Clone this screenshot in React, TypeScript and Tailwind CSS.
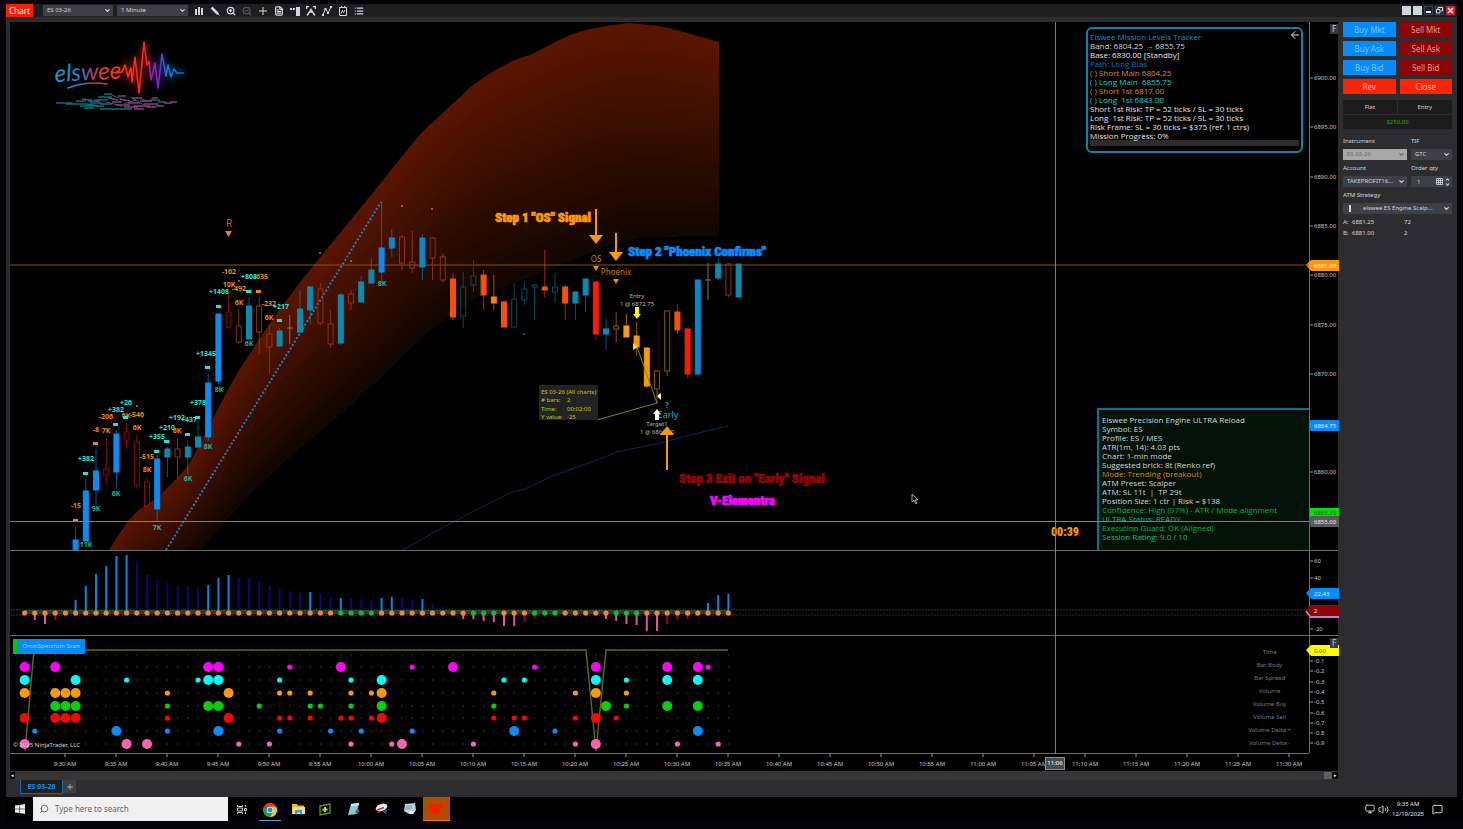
import { ReactNode } from 'react';
import {
    ArrowLeft,
    ChevronDown,
    ChevronUp,
    FileText,
    List,
    MessageSquare,
    Monitor,
    Plus,
    Search,
    Volume2,
    ZoomIn,
    ZoomOut,
} from 'lucide-react';

type Candle = [high: number, top: number, bottom: number, low: number, kind: string];

const BAR_START = 24.6;
const BAR_STEP = 10.2;
const barX = (i: number) => BAR_START + i * BAR_STEP;

const BLUE = '#0a8cf0';
const TEAL = '#0a8ab0';
const SKY = '#0889cc';

// h prefix = hollow body
const KINDS: Record<string, { color: string; hollow?: boolean }> = {
    blue: { color: BLUE },
    teal: { color: TEAL },
    sky: { color: SKY },
    hred: { color: '#8a0a00', hollow: true },
    hrust: { color: '#8f3208', hollow: true },
    hteal: { color: '#0b4a5c', hollow: true },
    hamber: { color: '#8a5600', hollow: true },
    fire: { color: '#fa5005' },
    orange: { color: '#fa8205' },
    amber: { color: '#fb9a04' },
    red: { color: '#fb1c04' },
    doji: { color: '#8f6a6e' },
};

// first entry is the 9:31 bar
const CANDLES: Candle[] = [
    [527, 540, 551, 551, 'blue'],
    [479, 491, 541, 541, 'blue'],
    [449, 471, 490, 504, 'blue'],
    [438, 469, 475, 484, 'hred'],
    [430, 434, 472, 489, 'blue'],
    [423, 432, 440, 449, 'hred'],
    [435, 442, 485, 489, 'hred'],
    [478, 482, 506, 508, 'hred'],
    [455, 459, 509, 522, 'blue'],
    [447, 449, 457, 477, 'teal'],
    [438, 449, 457, 479, 'hrust'],
    [441, 447, 457, 474, 'teal'],
    [422, 437, 447, 447, 'teal'],
    [374, 383, 437, 441, 'blue'],
    [313, 314, 381, 384, 'blue'],
    [293, 312, 327, 329, 'hred'],
    [310, 326, 342, 344, 'hrust'],
    [297, 306, 339, 339, 'teal'],
    [297, 306, 332, 354, 'hrust'],
    [325, 334, 347, 373, 'hrust'],
    [328, 331, 346, 347, 'teal'],
    [315, 328, 329, 344, 'doji'],
    [290, 309, 332, 334, 'teal'],
    [286, 287, 310, 324, 'teal'],
    [283, 289, 323, 325, 'hrust'],
    [310, 324, 344, 348, 'hrust'],
    [293, 295, 343, 345, 'teal'],
    [290, 294, 303, 310, 'hrust'],
    [276, 282, 302, 302, 'teal'],
    [258, 270, 283, 283, 'teal'],
    [202, 248, 272, 283, 'blue'],
    [229, 238, 248, 257, 'sky'],
    [235, 237, 263, 270, 'hrust'],
    [231, 262, 268, 273, 'hrust'],
    [234, 238, 267, 280, 'sky'],
    [237, 238, 258, 280, 'hrust'],
    [253, 257, 280, 282, 'hrust'],
    [273, 279, 317, 320, 'fire'],
    [272, 287, 316, 328, 'hteal'],
    [260, 276, 285, 292, 'hteal'],
    [270, 275, 295, 310, 'fire'],
    [275, 297, 303, 310, 'orange'],
    [300, 302, 327, 327, 'fire'],
    [283, 299, 327, 327, 'hteal'],
    [282, 289, 300, 305, 'hteal'],
    [284, 285, 287, 320, 'hteal'],
    [250, 287, 290, 298, 'fire'],
    [273, 287, 292, 303, 'hteal'],
    [285, 287, 303, 320, 'fire'],
    [291, 292, 303, 320, 'teal'],
    [279, 279, 295, 312, 'teal'],
    [281, 282, 334, 340, 'red'],
    [318, 329, 334, 350, 'sky'],
    [312, 326, 329, 342, 'hamber'],
    [314, 326, 337, 337, 'amber'],
    [322, 336, 347, 356, 'amber'],
    [347, 348, 386, 388, 'amber'],
    [370, 371, 389, 404, 'hamber'],
    [311, 311, 371, 376, 'hamber'],
    [304, 312, 330, 334, 'fire'],
    [328, 329, 374, 379, 'red'],
    [279, 280, 374, 376, 'sky'],
    [263, 280, 281, 300, 'doji'],
    [258, 264, 278, 280, 'teal'],
    [263, 264, 295, 297, 'hrust'],
    [264, 264, 297, 297, 'teal'],
];

const CLOUD_TOP = [
    [109, 550], [127, 522], [137, 511], [157, 498], [187, 468], [207, 430], [233, 380], [267, 327],
    [300, 282], [340, 233], [380, 184], [403, 155], [422, 132], [447, 109], [474, 84], [495, 70],
    [514, 60], [530, 55], [565, 37], [585, 30], [605, 26], [628, 23], [660, 26], [680, 31], [719, 42],
];
const CLOUD_BOTTOM = [
    [109, 630], [200, 550], [250, 493], [300, 447], [345, 410], [380, 378], [423, 335], [455, 312],
    [480, 295], [547, 270], [613, 243], [643, 237], [719, 235],
];

const LABELS: [x: number, y: number, text: string, tone: 'o' | 'c' | 'g'][] = [
    [229, 274, '-162', 'o'], [229, 287, '10K', 'o'], [239, 291, '-492', 'o'], [249, 279, '+808', 'c'],
    [261, 279, '-635', 'o'], [219, 294, '+1408', 'c'], [239, 305, '6K', 'o'], [249, 346, '6K', 'g'],
    [269, 306, '-232', 'o'], [281, 309, '+217', 'c'], [269, 320, '6K', 'o'], [206, 356, '+1345', 'c'],
    [219, 392, '8K', 'g'], [198, 405, '+378', 'c'], [208, 449, '8K', 'g'], [126, 405, '+26', 'c'],
    [116, 412, '+382', 'c'], [106, 419, '-206', 'o'], [126, 418, '6K', 'o'], [137, 417, '-546', 'o'],
    [106, 433, '7K', 'o'], [137, 430, '6K', 'o'], [96, 432, '-8', 'o'], [147, 459, '-515', 'o'],
    [147, 472, '8K', 'o'], [157, 439, '+355', 'c'], [167, 430, '+210', 'c'], [177, 420, '+192', 'c'],
    [189, 422, '+437', 'c'], [177, 433, '6K', 'o'], [188, 481, '6K', 'g'], [86, 461, '+382', 'c'],
    [116, 496, '6K', 'g'], [96, 511, '9K', 'g'], [157, 530, '7K', 'g'], [76, 508, '-15', 'o'],
    [86, 547, '11K', 'g'], [382, 286, '8K', 'g'],
];
const TONES = { o: '#ee8a0a', c: '#1ee6dc', g: '#1eb496' };

const CYAN_MARKS = [
    [86, 473], [116, 424], [219, 306], [249, 291], [208, 367], [198, 417], [188, 434], [167, 441],
    [157, 451], [126, 417], [280, 320],
];
const ORANGE_MARKS = [[76, 520], [96, 443], [259, 291]];
const ORANGE_DOTS = [[137, 406], [239, 281], [320, 253], [351, 261], [402, 206], [432, 209]];

const HISTOGRAM: [bar: number, y: number, color: 'b' | 'n' | 'p' | 'r'][] = [
    [1, 620, 'p'], [2, 624, 'p'], [3, 620, 'r'], [5, 600, 'b'], [6, 586, 'b'], [7, 574, 'b'], [8, 566, 'b'],
    [9, 556, 'b'], [10, 555, 'b'], [11, 563, 'n'], [12, 575, 'n'], [13, 580, 'n'], [14, 583, 'n'],
    [15, 586, 'n'], [16, 586, 'n'], [17, 587, 'n'], [18, 585, 'b'], [19, 578, 'b'], [20, 575, 'b'],
    [21, 578, 'n'], [22, 578, 'n'], [23, 581, 'n'], [24, 586, 'n'], [25, 588, 'n'], [26, 591, 'n'],
    [27, 593, 'n'], [28, 592, 'b'], [29, 594, 'n'], [30, 598, 'n'], [31, 598, 'b'], [32, 599, 'n'],
    [33, 599, 'n'], [34, 600, 'n'], [35, 598, 'b'], [36, 597, 'b'], [37, 598, 'n'], [38, 600, 'n'],
    [39, 599, 'b'], [40, 603, 'n'], [41, 607, 'n'], [43, 619, 'p'], [44, 619, 'p'], [45, 621, 'p'],
    [46, 622, 'p'], [47, 626, 'p'], [48, 626, 'p'], [49, 622, 'r'], [50, 618, 'r'], [57, 619, 'p'],
    [58, 621, 'p'], [59, 624, 'p'], [60, 625, 'p'], [61, 631, 'p'], [62, 631, 'p'], [63, 624, 'r'],
    [64, 620, 'r'], [65, 619, 'r'], [67, 603, 'b'], [68, 595, 'b'], [69, 594, 'b'],
];
const HIST_COLORS = { b: '#0a84e8', n: '#08087a', p: '#e2569f', r: '#96060a' };
const GREEN_BARS = [31, 32, 33, 34, 44, 45, 46, 50, 51, 52, 58, 59, 60];

const SCAN_ROWS = [
    { y: 667, color: '#fa05fa', big: [0, 3, 18, 19, 31, 42, 56, 63, 66], small: [26, 38, 50, 67] },
    { y: 680, color: '#05fafa', big: [0, 5, 18, 19, 35, 56, 63, 66], small: [10, 17, 25, 32, 47, 49, 59] },
    { y: 693, color: '#fb9a04', big: [0, 3, 4, 5, 20, 35, 56], small: [14, 25, 26, 28, 32, 34, 46, 54, 59] },
    { y: 706, color: '#04d204', big: [3, 4, 5, 18, 19, 35, 57, 63, 66], small: [14, 23, 28, 29, 32, 46, 59] },
    { y: 718, color: '#fb0404', big: [0, 3, 4, 5, 20, 35, 56], small: [14, 25, 26, 28, 31, 32, 34, 46, 48, 49, 54, 58] },
    { y: 731, color: '#0a8cfa', big: [9, 19, 48, 66], small: [1, 14, 25, 30, 33, 38, 52] },
    { y: 744, color: '#fb64b4', big: [0, 10, 12, 37, 56], small: [21, 24, 32, 36, 44, 54, 64, 68] },
];
const SCAN_NAMES = ['Time', 'Bar Body', 'Bar Spread', 'Volume', 'Volume Buy', 'Volume Sell', 'Volume Delta +', 'Volume Delta -'];

const PRICES: [string, number][] = [
    ['6900.00', 78], ['6895.00', 127], ['6890.00', 177], ['6885.00', 226], ['6880.00', 275],
    ['6875.00', 325], ['6870.00', 374], ['6860.00', 472],
];

const TIMES = Array.from({ length: 25 }, (_, i) => {
    const min = 570 + i * 5;
    return `${Math.floor(min / 60)}:${String(min % 60).padStart(2, '0')} AM`;
});

const TRACKER: [string, string][] = [
    ['Elswee Mission Levels Tracker', 'text-[#0e9bbd]'],
    ['Band: 6804.25 → 6855.75', 'text-gray-300'],
    ['Base: 6830.00 [Standby]', 'text-gray-200'],
    ['Path: Long Bias', 'text-[#0a6fd0]'],
    ['( ) Short Main 6804.25', 'text-[#e08a0a]'],
    ['( ) Long Main  6855.75', 'text-[#14d6cc]'],
    ['( ) Short 1st 6817.00', 'text-[#e08a0a]'],
    ['( ) Long  1st 6843.00', 'text-[#14d6cc]'],
    ['Short 1st Risk: TP = 52 ticks / SL = 30 ticks', 'text-gray-200'],
    ['Long  1st Risk: TP = 52 ticks / SL = 30 ticks', 'text-gray-200'],
    ['Risk Frame: SL = 30 ticks = $375 (ref. 1 ctrs)', 'text-gray-200'],
    ['Mission Progress: 0%', 'text-gray-200'],
];

const ENGINE: [string, string][] = [
    ['Elswee Precision Engine ULTRA Reload', 'text-gray-300'],
    ['Symbol: ES', 'text-gray-300'],
    ['Profile: ES / MES', 'text-gray-300'],
    ['ATR(1m, 14): 4.03 pts', 'text-gray-300'],
    ['Chart: 1-min mode', 'text-gray-300'],
    ['Suggested brick: 8t (Renko ref)', 'text-gray-300'],
    ['Mode: Trending (breakout)', 'text-[#d9860c]'],
    ['ATM Preset: Scalper', 'text-gray-300'],
    ['ATM: SL 11t  |  TP 29t', 'text-gray-300'],
    ['Position Size: 1 ctr | Risk = $138', 'text-gray-300'],
    ['Confidence: High (97%) - ATR / Mode alignment', 'text-[#0cb04c]'],
    ['ULTRA Status: READY', 'text-[#0fb58c]'],
    ['Execution Guard: OK (Aligned)', 'text-[#0cb04c]'],
    ['Session Rating: 9.0 / 10', 'text-[#0cc070]'],
];

const sampleAt = (points: number[][], x: number) => {
    const next = points.findIndex((p) => p[0] >= x);
    if (next <= 0) return points[0][1];
    const [x0, y0] = points[next - 1];
    const [x1, y1] = points[next];
    return y0 + ((y1 - y0) * (x - x0)) / (x1 - x0);
};

const CLOUD_BANDS = Array.from({ length: 24 }, (_, band) => {
    const xs = Array.from({ length: 62 }, (_, i) => 109 + i * 10);
    const edge = (t: number) =>
        xs.map((x) => {
            const top = sampleAt(CLOUD_TOP, x);
            return `${x},${(top + (sampleAt(CLOUD_BOTTOM, x) - top) * t).toFixed(1)}`;
        });
    const t = band / 23;
    const mix = (a: number, b: number) => Math.round(a + (b - a) * t);
    return {
        points: [...edge(band / 24), ...edge(1).reverse()].join(' '),
        color: `rgb(${mix(90, 18)}, ${mix(21, 6)}, ${mix(0, 0)})`,
    };
});

const PULSE =
    'M115 73 122 72 125 65 128 77 131 68 132 82 135 57 137 75 139 93 144 42 147 65 149 61 151 80 155 63 158 88 162 54 166 76 168 65 171 77 174 69 177 73 184 73';

function Logo() {
    return (
        <>
            <defs>
                <linearGradient id="word" gradientUnits="userSpaceOnUse" x1="55" y1="0" x2="120" y2="0">
                    <stop offset="0" stopColor="#0f9fd0" />
                    <stop offset="0.38" stopColor="#1f86d8" />
                    <stop offset="0.55" stopColor="#a33a78" />
                    <stop offset="0.75" stopColor="#f03c12" />
                    <stop offset="1" stopColor="#ff3a08" />
                </linearGradient>
                <linearGradient id="pulse" gradientUnits="userSpaceOnUse" x1="118" y1="0" x2="184" y2="0">
                    <stop offset="0" stopColor="#ff3a08" />
                    <stop offset="0.42" stopColor="#fb2a10" />
                    <stop offset="0.52" stopColor="#8a22b0" />
                    <stop offset="0.64" stopColor="#5c3ad0" />
                    <stop offset="0.74" stopColor="#1c78d8" />
                    <stop offset="1" stopColor="#0a6fb8" />
                </linearGradient>
                <filter id="glow" x="-20%" y="-20%" width="140%" height="140%">
                    <feGaussianBlur stdDeviation="3" />
                </filter>
            </defs>
            <path d={PULSE} fill="none" stroke="url(#pulse)" strokeWidth="5" opacity="0.35" filter="url(#glow)" />
            <path d={PULSE} fill="none" stroke="url(#pulse)" strokeWidth="1.5" strokeLinejoin="round" />
            <text
                x="55"
                y="82"
                fill="url(#word)"
                transform="rotate(-3 55 82)"
                className="font-[Lato,sans-serif] text-[24px] font-normal italic"
            >
                elswee
            </text>
            <path d="M68 88Q86 81 107 84" fill="none" stroke="url(#word)" strokeWidth="1.5" strokeLinecap="round" />
            <g fill="none" strokeWidth="1.5">
                <path
                    d="M56 103h16M66 104h20M76 101h10M80 106h18M82 99l10 1M90 103h12M86 104l14 2M84 108h10M100 109h32M104 94h8M98 97h14M96 100h12M102 104h10M150 100h10M158 102h8M88 101h12M92 106h12"
                    stroke="#0b6f7a"
                />
                <path
                    d="M108 98l10 2M112 102h10M118 96h8M120 99l10 2M116 105h14M128 103h12M132 98h10M134 106h16M140 101h12M134 109h10M144 104h14M152 98h6M156 106h8M164 103h8M170 102h7M124 107h14M146 107h10"
                    stroke="#85417a"
                />
                <path d="M112 95l14 6M106 102l16 4M124 104l12-4M140 98l8 4M94 99l8 6M130 97l14 8" stroke="#4a5a80" strokeWidth="1" />
            </g>
        </>
    );
}

function PriceTag({ y, label, bg, fg = '#e8e8e8' }: { y: number; label: string; bg: string; fg?: string }) {
    return (
        <>
            <path d={`M-4 ${y}L1 ${y - 5}H29V${y + 6}H1Z`} fill={bg} />
            <text x="4" y={y + 3} fill={fg} className="text-[6px]">
                {label}
            </text>
        </>
    );
}

function Tick({ y, label }: { y: number; label: string }) {
    return (
        <>
            <path d={`M0 ${y}H3`} stroke="#999" />
            <text x="4" y={y + 2} fill="#c4c4c4" className="text-[6px]">
                {label}
            </text>
        </>
    );
}

function Axis({ offset, children }: { offset: number; children: ReactNode }) {
    return (
        <svg className="h-full w-[29px] shrink-0 overflow-visible border-l border-[#6c6c6c]" aria-hidden="true">
            <g transform={`translate(0 ${-offset})`}>{children}</g>
        </svg>
    );
}

function Arrow({ x, from, to }: { x: number; from: number; to: number }) {
    const dir = to > from ? -1 : 1;
    return (
        <>
            <path d={`M${x} ${from}V${to + dir * 6}`} stroke="#fb9a04" strokeWidth="2" />
            <path d={`M${x - 7} ${to + dir * 9}H${x + 7}L${x} ${to}Z`} fill="#fb9a04" />
        </>
    );
}

function PriceChart() {
    return (
        <svg className="h-full w-full" role="img" aria-label="ES 03-26 price chart">
            <g transform="translate(-10 -22)">
                {CLOUD_BANDS.map((band, i) => (
                    <polygon key={i} points={band.points} fill={band.color} />
                ))}
                <Logo />
            </g>
            <line x1="0" x2="100%" y1="243" y2="243" stroke="#8a5600" />
            <g transform="translate(-10 -22)">
                <polyline
                    points="403,550 440,529 480,508 512,492 525,489 550,477 580,466 600,459 617,452 660,443 690,435 728,426"
                    fill="none"
                    stroke="#0a2c48"
                />
                <path d="M166 550 381 202" stroke="#2478cc" strokeWidth="2" strokeDasharray="2 2" />

                {CANDLES.map(([high, top, bottom, low, kind], i) => {
                    const x = barX(i + 5);
                    const { color, hollow } = KINDS[kind];
                    if (kind === 'doji') {
                        return (
                            <path key={i} d={`M${x} ${high}V${low}M${x - 3} ${top}h6`} stroke={color} />
                        );
                    }
                    return (
                        <g key={i} stroke={color}>
                            <path d={`M${x} ${high}V${top}M${x} ${bottom}V${low}`} opacity={hollow ? 1 : 0.6} />
                            <rect
                                x={x - 2.5}
                                y={top}
                                width="5"
                                height={Math.max(bottom - top, 2)}
                                fill={hollow ? 'none' : color}
                            />
                        </g>
                    );
                })}

                <g className="text-[7px] font-bold" textAnchor="middle">
                    {LABELS.map(([x, y, text, tone], i) => (
                        <text key={i} x={x} y={y} fill={TONES[tone]}>
                            {text}
                        </text>
                    ))}
                </g>
                {CYAN_MARKS.map(([x, y]) => (
                    <rect key={`${x}-${y}`} x={x - 3} y={y - 1} width="5" height="3" fill="#1ee6dc" />
                ))}
                {ORANGE_MARKS.map(([x, y]) => (
                    <rect key={`${x}-${y}`} x={x - 3} y={y - 1} width="5" height="3" fill="#ee8a0a" />
                ))}
                {ORANGE_DOTS.map(([x, y]) => (
                    <circle key={x} cx={x} cy={y} r="1" fill="#d07808" />
                ))}
                <circle cx="524" cy="334" r="1" fill="#1a70c0" />

                <text x="229" y="227" textAnchor="middle" fill="#c85c38" className="text-[10px]">R</text>
                <path d="M225 231h7l-3.5 6Z" fill="#f07850" />

                {/* trade path and its readout */}
                <path d="M637 347 657 403 597 420" fill="none" stroke="#84840a" />
                <rect x="539" y="385" width="59" height="35" fill="#232323" />
                <g fill="#c8c80c" className="text-[6px]">
                    <text x="541" y="394">ES 03-26 (All charts)</text>
                    <text x="541" y="402"># bars:</text>
                    <text x="567" y="402">2</text>
                    <text x="541" y="411">Time:</text>
                    <text x="567" y="411">00:02:00</text>
                    <text x="541" y="419">Y value:</text>
                    <text x="567" y="419">-25</text>
                </g>
                <g fill="#b8b8b8" textAnchor="middle" className="text-[6px]">
                    <text x="637" y="298">Entry</text>
                    <text x="637" y="306">1 @ 6872.75</text>
                    <text x="657" y="426">Target1</text>
                    <text x="657" y="434">1 @ 6866.50</text>
                </g>
                <path d="M635 307h4v7h2l-4 5-4-5h2Z" fill="#f5f505" />
                <path d="M633 343 638 347 633 350Z" fill="#e8e805" />
                <path d="M661 393v7l-4-4Z" fill="#fff" />
                <path d="M655 420v-6h-2l4-5 4 5h-2v6Z" fill="#fff" />
                <text x="596" y="262" textAnchor="middle" fill="#c87c0c" className="text-[8px]">OS</text>
                <path d="M593 266h6l-3 5Z" fill="#f0900a" />
                <text x="616" y="275" textAnchor="middle" fill="#c87c0c" className="text-[8px]">Phoenix</text>
                <path d="M613 279h6l-3 5Z" fill="#f0900a" />
                <text x="667" y="408" textAnchor="middle" fill="#1a90c8" className="text-[8px] font-bold">?</text>
                <text x="668" y="418" textAnchor="middle" fill="#14bcb4" className="text-[9px]">Early</text>

                <Arrow x={596} from={209} to={244} />
                <Arrow x={616} from={233} to={261} />
                <Arrow x={667} from={470} to={426} />

                <g
                    strokeWidth="0.7"
                    className="font-['Impact','Roboto_Condensed','Open_Sans_Condensed','Roboto',sans-serif] text-[13px] font-black"
                >
                    <text x="495" y="222" fill="#fb9a04" stroke="#fb9a04">Step 1 "OS" Signal</text>
                    <text x="628" y="256" fill="#0a8cfa" stroke="#0a8cfa">Step 2 "Phoenix Confirms"</text>
                    <text x="679" y="483" fill="#900608" stroke="#900608">Step 3 Exit on "Early" Signal</text>
                    <text x="710" y="505" fill="#fa05fa" stroke="#fa05fa">V-Elementra</text>
                </g>
                <path d="M912 494v8l2-2 2 4 1-1-2-3h3Z" fill="#000" stroke="#ccc" strokeWidth="0.8" />
            </g>
        </svg>
    );
}

function HistogramChart() {
    return (
        <svg className="h-full w-full" role="img" aria-label="Momentum histogram">
            <line x1="0" x2="100%" y1="59" y2="59" stroke="#3c3c3c" strokeDasharray="2 1" />
            <line x1="0" x2="100%" y1="64" y2="64" stroke="#303030" strokeDasharray="2 1" />
            <g transform="translate(-10 -551)">
                {HISTOGRAM.map(([bar, y, c]) => (
                    <line
                        key={bar}
                        x1={barX(bar)}
                        x2={barX(bar)}
                        y1="612"
                        y2={y}
                        stroke={HIST_COLORS[c]}
                        strokeWidth="2"
                    />
                ))}
                <path d="M24 611H729" stroke="#2c8a50" />
                <path d="M24 613H729" stroke="#8a5070" />
                {Array.from({ length: 70 }, (_, i) => (
                    <circle
                        key={i}
                        cx={barX(i)}
                        cy="613"
                        r="2.6"
                        fill={GREEN_BARS.includes(i) ? '#18b828' : '#f08a1e'}
                    />
                ))}
            </g>
        </svg>
    );
}

function ScanChart() {
    return (
        <svg className="h-full w-full" role="img" aria-label="OmniSpectrum scan">
            <g transform="translate(-10 -636)">
                {[655, ...SCAN_ROWS.map((row) => row.y)].map((y) => (
                    <path
                        key={y}
                        d={`M24 ${y}H730`}
                        stroke="#2a2a2a"
                        strokeWidth="1.4"
                        strokeDasharray="1.4 8.8"
                    />
                ))}
                <path d="M25 751 34 650H586L596 751 606 650H728" fill="none" stroke="#686808" strokeWidth="1.4" />
                {SCAN_ROWS.map((row) => (
                    <g key={row.y} fill={row.color}>
                        {row.big.map((i) => (
                            <circle key={i} cx={barX(i)} cy={row.y} r="5" />
                        ))}
                        {row.small.map((i) => (
                            <circle key={i} cx={barX(i)} cy={row.y} r="2.6" />
                        ))}
                    </g>
                ))}
            </g>
        </svg>
    );
}

function TimeAxis() {
    return (
        <svg className="h-[18px] w-full border-t border-[#6c6c6c]" aria-hidden="true">
            {TIMES.map((time, i) => (
                <g key={time}>
                    <path d={`M${55 + i * 51} 0v3`} stroke="#999" />
                    <text x={55 + i * 51} y="12" textAnchor="middle" fill="#c4c4c4" className="text-[6px]">
                        {time}
                    </text>
                </g>
            ))}
        </svg>
    );
}

interface DropdownProps {
    label: string;
    value: string;
    className?: string;
}

function Dropdown({ label, value, className = '' }: DropdownProps) {
    return (
        <div className={`relative h-[11px] bg-[#3f3f46] text-gray-300 ${className}`}>
            <select
                aria-label={label}
                className="block h-full w-full appearance-none truncate bg-transparent pr-2 pl-1 text-[6px] leading-[11px] outline-none"
            >
                <option>{value}</option>
            </select>
            <ChevronDown size={7} strokeWidth={4} className="pointer-events-none absolute top-[2px] right-[2px]" />
        </div>
    );
}

function ToolIcon({ label, children }: { label: string; children: ReactNode }) {
    return (
        <button aria-label={label}>
            <svg width="10" height="10" viewBox="0 0 10 10" fill="none" stroke="currentColor">
                {children}
            </svg>
        </button>
    );
}

function Toolbar() {
    return (
        <div className="flex h-[13px] items-center bg-[#1e1e1e]">
            <span className="flex h-[13px] w-[27px] items-center justify-center bg-[#fb1c04] text-[8px] text-white">
                Chart
            </span>
            <Dropdown label="Chart instrument" value="ES 03-26" className="ml-[10px] w-[70px]" />
            <Dropdown label="Interval" value="1 Minute" className="ml-1 w-[71px]" />
            <div className="ml-[6px] flex items-center gap-[6px] text-gray-300">
                <ToolIcon label="Bar type">
                    <path d="M2 3v6M5 1v8M8 2v7" strokeWidth="2" />
                </ToolIcon>
                <ToolIcon label="Drawing tools">
                    <path d="M1.5 1.5 8 8" strokeWidth="2.5" />
                    <path d="M8 8l1.5 1.5" />
                </ToolIcon>
                <button aria-label="Zoom in">
                    <ZoomIn size={10} strokeWidth={3} />
                </button>
                <button aria-label="Zoom out" className="text-gray-600">
                    <ZoomOut size={10} strokeWidth={3} />
                </button>
                <ToolIcon label="Crosshair">
                    <path d="M5 1v8M1 5h8" />
                </ToolIcon>
                <button aria-label="Chart template">
                    <FileText size={10} strokeWidth={3} />
                </button>
                <ToolIcon label="Chart trader">
                    <path d="M6 1h4v9H6zM0 2h2v2H0zM3 2h2v2H3z" fill="currentColor" stroke="none" />
                </ToolIcon>
                <ToolIcon label="Data series">
                    <path d="M.5 3V.5H3M7 .5h2.5V3M1 9.5 3.5 6 5 3.5 6.5 6 9 9.5M3 6h4" strokeWidth="1.5" />
                </ToolIcon>
                <ToolIcon label="Indicators">
                    <path d="M1 9 3.5 2.5 6 7 9 1" />
                    <path d="M0 8h2v2H0zM2.5 2h2v2h-2zM5 6h2v2H5zM8 0h2v2H8z" fill="currentColor" stroke="none" />
                </ToolIcon>
                <ToolIcon label="Strategies">
                    <path d="M1.5 1.5h7v8h-7zM3.5 0v2M6.5 0v2M3 7.5l1.5-3 1 2L7 4" />
                </ToolIcon>
                <button aria-label="Properties">
                    <List size={10} strokeWidth={3} />
                </button>
            </div>
            <div className="mr-[2px] ml-auto flex items-center gap-[2px]">
                <button aria-label="Link instrument" className="h-[9px] w-[9px] bg-gray-300" />
                <button aria-label="Link interval" className="h-[9px] w-[9px] bg-gray-300" />
                <button aria-label="Minimize" className="flex h-[9px] w-[9px] items-end border border-gray-700 p-px">
                    <span className="h-[2px] w-full bg-gray-200" />
                </button>
                <button aria-label="Restore" className="h-[9px] w-[9px] border border-gray-700">
                    <svg width="7" height="7" viewBox="0 0 7 7" fill="none" stroke="#ddd">
                        <path d="M2 2V.5h4.5V4H5M.5 2.5H4V6H.5Z" />
                    </svg>
                </button>
                <button aria-label="Close window" className="flex h-[9px] w-[9px] items-center justify-center bg-[#d81c34]">
                    <svg width="7" height="7" viewBox="0 0 7 7" stroke="#fff" strokeWidth="1.5">
                        <path d="M1 1l5 5M6 1 1 6" />
                    </svg>
                </button>
            </div>
        </div>
    );
}

const ORDER_BUTTONS = [
    ['Buy Mkt', 'bg-[#058cfa] text-[#7cc4ff]'],
    ['Sell Mkt', 'bg-[#8c0404] text-[#e09a9a]'],
    ['Buy Ask', 'bg-[#058cfa] text-[#7cc4ff]'],
    ['Sell Ask', 'bg-[#8c0404] text-[#e09a9a]'],
    ['Buy Bid', 'bg-[#058cfa] text-[#7cc4ff]'],
    ['Sell Bid', 'bg-[#8c0404] text-[#e09a9a]'],
    ['Rev', 'bg-[#fb2404] text-[#ffb4a0]'],
    ['Close', 'bg-[#fb2404] text-[#ffb4a0]'],
];

function OrderPanel() {
    return (
        <aside className="w-[119px] shrink-0 px-[5px] text-[6px] text-gray-300">
            <div className="grid grid-cols-2 gap-1">
                {ORDER_BUTTONS.map(([label, color]) => (
                    <button key={label} className={`h-[15px] text-[8px] leading-[15px] ${color}`}>
                        {label}
                    </button>
                ))}
            </div>
            <div className="mt-[6px] grid grid-cols-2 bg-[#1c1c1c] text-center leading-[14px]">
                <span className="border-r border-[#2d2d30]">Flat</span>
                <span>Entry</span>
                <span className="col-span-2 border-t border-[#2d2d30] text-[#0cb40c]">$250.00</span>
            </div>
            <div className="mt-[7px] grid grid-cols-[64px_1fr] gap-x-1 leading-[10px]">
                <span>Instrument</span>
                <span>TIF</span>
            </div>
            <div className="mt-[3px] grid grid-cols-[64px_1fr] gap-x-1">
                <div className="relative h-[11px] bg-[#a8a8a8] text-[#707070]">
                    <select aria-label="Instrument" disabled className="block h-full w-full appearance-none pl-1 text-[6px] leading-[11px] opacity-100">
                        <option>ES 03-26</option>
                    </select>
                    <ChevronDown size={7} strokeWidth={4} className="absolute top-[2px] right-[2px]" />
                </div>
                <Dropdown label="TIF" value="GTC" />
            </div>
            <div className="mt-[3px] grid grid-cols-[64px_1fr] gap-x-1 leading-[10px]">
                <span>Account</span>
                <span>Order qty</span>
            </div>
            <div className="mt-[3px] grid grid-cols-[64px_1fr] gap-x-1">
                <Dropdown label="Account" value="TAKEPROFIT16..." />
                <div className="flex h-[11px] items-center bg-[#3f3f46]">
                    <input aria-label="Order qty" defaultValue="1" className="h-full w-full min-w-0 bg-transparent pl-[6px] outline-none" />
                    <svg width="7" height="7" viewBox="0 0 7 7" className="shrink-0" stroke="currentColor" fill="none">
                        <path d="M.5.5h6v6h-6zM2.5 0v7M4.5 0v7M0 2.5h7M0 4.5h7" strokeWidth="0.8" />
                    </svg>
                    <div className="flex shrink-0 flex-col px-[2px]">
                        <ChevronUp size={5} strokeWidth={5} />
                        <ChevronDown size={5} strokeWidth={5} />
                    </div>
                </div>
            </div>
            <p className="mt-[3px] leading-[10px]">ATM Strategy</p>
            <div className="relative mt-[3px]">
                <span className="absolute top-[2px] left-[6px] z-10 h-[7px] w-[2px] bg-gray-300" />
                <Dropdown label="ATM Strategy" value="elswee ES Engine Scalp..." className="pl-4" />
            </div>
            <dl className="mt-[3px] grid grid-cols-[9px_52px_1fr] leading-[11px]">
                <dt>A:</dt>
                <dd>6881.25</dd>
                <dd>72</dd>
                <dt>B:</dt>
                <dd>6881.00</dd>
                <dd>2</dd>
            </dl>
        </aside>
    );
}

function Taskbar() {
    return (
        <footer className="ml-[6px] flex h-[24px] items-center bg-black pr-5">
            <button aria-label="Start" className="flex h-full w-[27px] items-center justify-center">
                <svg width="10" height="10" viewBox="0 0 10 10" fill="#f0f0f0">
                    <path d="M0 1.5 4.500 1v3.700H0zM5 .9 10 0v4.700H5zM0 5.300h4.500V9L0 8.500zM5 5.300h5V10L5 9.100z" />
                </svg>
            </button>
            <label className="flex h-full w-[195px] items-center gap-[6px] bg-[#f0f0f0] pl-[6px] text-[#555]">
                <Search size={10} className="shrink-0 -scale-x-100" />
                <input
                    aria-label="Search"
                    placeholder="Type here to search"
                    className="w-full min-w-0 bg-transparent text-[8px] outline-none placeholder:text-[#666]"
                />
            </label>
            <div className="flex h-full items-center">
                <button aria-label="Task view" className="flex w-[27px] justify-center">
                    <svg width="10" height="9" viewBox="0 0 10 9" fill="none" stroke="#ccc">
                        <path d="M.5 0v1.5h5V0M.5 3h5v3h-5zM.5 9V7.5h5V9M8.500 0v2M8.500 6.500V9M7.500 3.500h2v2h-2z" />
                    </svg>
                </button>
                <button aria-label="Chrome" className="flex h-full w-[30px] flex-col items-center justify-end">
                    <svg width="14" height="14" viewBox="0 0 14 14">
                        <path d="M7 7 .9 3.500A7 7 0 0 1 13.100 3.500H7Z" fill="#e33b2e" />
                        <path d="M7 7 .9 3.500A7 7 0 0 0 6.500 14L10 8.700Z" fill="#1da254" />
                        <path d="M13.100 3.500H7L10 8.700 6.700 14A7 7 0 0 0 13.100 3.500Z" fill="#fbc517" />
                        <circle cx="7" cy="7" r="3.2" fill="#fff" />
                        <circle cx="7" cy="7" r="2.5" fill="#3b7de8" />
                    </svg>
                    <span className="mt-[3px] h-px w-[22px] bg-[#4aa0e0]" />
                </button>
                <button aria-label="File Explorer" className="flex w-[26px] justify-center">
                    <svg width="13" height="12" viewBox="0 0 13 12">
                        <path d="M0 1h5l1 1.5h6V11H0z" fill="#e8b838" />
                        <path d="M1 4h12v7H0z" fill="#fbe08a" />
                        <path d="M3 7h7v4.500H8V9.500H5v2H3z" fill="#30a0e0" />
                    </svg>
                </button>
                <button aria-label="GPU settings" className="flex w-[28px] justify-center">
                    <svg width="12" height="13" viewBox="0 0 12 13" fill="none" stroke="#6a9a14" strokeWidth="1.3">
                        <path d="M1 3 11 1v9L1 12Z" />
                        <path d="M6 4v5M3.500 6.500h5" stroke="#a8e030" strokeWidth="2" />
                    </svg>
                </button>
                <button aria-label="Notepad" className="flex w-[28px] justify-center">
                    <svg width="13" height="12" viewBox="0 0 13 12">
                        <path d="M4 1 12 0 10 11 1 12Z" fill="#8accd4" />
                        <path d="M4 1 12 0v2L4 3Z" fill="#d8e8e8" />
                        <path d="M8 9l3-5 1 5-2 2z" fill="#3a7c88" />
                    </svg>
                </button>
                <button aria-label="Snipping Tool" className="flex w-[28px] justify-center">
                    <svg width="13" height="12" viewBox="0 0 13 12">
                        <ellipse cx="6.5" cy="4.5" rx="6" ry="3.5" fill="#f0e8e8" transform="rotate(-20 6.5 4.5)" />
                        <path d="M2 7 9 4.500M5 8l-2 2" stroke="#d03040" strokeWidth="1.5" />
                        <path d="M7 8l5-1-1 4z" fill="#2068a8" />
                    </svg>
                </button>
                <button aria-label="Server Manager" className="flex w-[28px] justify-center">
                    <svg width="13" height="12" viewBox="0 0 13 12">
                        <path d="M2 1 12 0l1 7-3 4H6L1 8Z" fill="#c4ccd0" />
                        <path d="M3 3l6-1v4L3 7Z" fill="#88b8d0" />
                        <path d="M7 8h5l-2 3H7z" fill="#f4f4f4" />
                    </svg>
                </button>
                <button aria-label="NinjaTrader" className="flex h-full w-[27px] items-center justify-center border-b border-[#fb7a1c] bg-[#b04c04]">
                    <svg width="15" height="11" viewBox="0 0 15 11" fill="#fb1c04">
                        <path d="M0 3 3 0l2 2 2-1 1 1 6-2-1 4-3 1 1 5-3 1-2-2-2 2-3-1 1-3-2 1 1-3Z" />
                    </svg>
                </button>
            </div>
            <div className="ml-auto flex items-center text-gray-200">
                <Monitor size={10} />
                <Volume2 size={11} className="ml-[3px]" />
                <div className="ml-[3px] text-center text-[6px] leading-[10px]">
                    <p>9:35 AM</p>
                    <p>12/19/2025</p>
                </div>
                <MessageSquare size={11} className="ml-2" />
            </div>
        </footer>
    );
}

export default function App() {
    return (
        <div className="min-h-screen overflow-x-hidden bg-[#040308] pt-1 font-['Noto_Sans','Open_Sans',sans-serif]">
            <main className="mr-[6px] ml-[6px] bg-[#2d2d30]">
                <Toolbar />
                <div className="flex pt-[5px] pl-1">
                    <section className="relative min-w-0 flex-1 bg-black">
                        <div className="flex h-[529px] border-b border-[#6c6c6c]">
                            <div className="relative min-w-0 flex-1">
                                <PriceChart />
                                <div className="absolute top-[5px] right-[6px] h-[126px] w-[217px] rounded-md border-2 border-[#0a86ac] bg-black px-[2px] pt-[3px] font-['Open_Sans','Noto_Sans',sans-serif] text-[8px] leading-[9px] whitespace-pre">
                                    {TRACKER.map(([text, color]) => (
                                        <p key={text} className={color}>
                                            {text}
                                        </p>
                                    ))}
                                    <div className="h-[6px] bg-[#2c2c2c]" />
                                    <ArrowLeft size={12} className="absolute top-0 right-0 text-gray-200" />
                                </div>
                                <div className="absolute right-0 bottom-0 h-[142px] w-[212px] border-t-2 border-l-2 border-[#0a7290] bg-[#021206] px-[3px] pt-[5px] font-['Open_Sans','Noto_Sans',sans-serif] text-[8px] leading-[9px] whitespace-pre">
                                    {ENGINE.map(([text, color]) => (
                                        <p key={text} className={color}>
                                            {text}
                                        </p>
                                    ))}
                                </div>
                                <span className="absolute right-[230px] bottom-[9px] font-['Impact','Roboto_Condensed','Open_Sans_Condensed','Roboto',sans-serif] text-[12px] leading-[17px] font-black text-[#fb9a04]">
                                    00:39
                                </span>
                            </div>
                            <Axis offset={22}>
                                {PRICES.map(([label, y]) => (
                                    <Tick key={label} y={y} label={label} />
                                ))}
                                <rect x="20" y="24" width="8" height="10" fill="#3a3a3e" />
                                <text x="22" y="32" fill="#ccc" className="text-[8px]">F</text>
                                <PriceTag y={265} label="6881.00" bg="#fb9a04" />
                                <PriceTag y={425} label="6864.75" bg="#058cfa" />
                                <rect x="0" y="508" width="29" height="10" fill="#04dc04" />
                                <text x="4" y="515" fill="#0a5c0a" className="text-[6px]">6855.75</text>
                                <PriceTag y={521} label="6855.00" bg="#5a5a5e" />
                            </Axis>
                        </div>
                        <div className="flex h-[85px] border-b border-[#6c6c6c]">
                            <div className="min-w-0 flex-1">
                                <HistogramChart />
                            </div>
                            <Axis offset={551}>
                                <Tick y={561} label="60" />
                                <Tick y={578} label="40" />
                                <Tick y={629} label="-20" />
                                <PriceTag y={593} label="22.43" bg="#058cfa" />
                                <path d="M-4 611 1 617H28V606" fill="none" stroke="#d078d0" strokeWidth="2" />
                                <PriceTag y={610} label="2" bg="#8c0404" />
                            </Axis>
                        </div>
                        <div className="flex h-[117px]">
                            <div className="relative min-w-0 flex-1">
                                <ScanChart />
                                <button className="absolute top-[3px] left-[3px] h-[15px] w-[72px] border-l-4 border-[#04c404] bg-[#058cfa] font-['Open_Sans','Noto_Sans',sans-serif] text-[6px] text-[#a8d8ff]">
                                    OmniSpectrum Scan
                                </button>
                                <span className="absolute bottom-[3px] left-[3px] text-[6px] leading-[10px] text-gray-300">
                                    © 2025 NinjaTrader, LLC
                                </span>
                                <div className="absolute top-[10px] right-[18px] text-center text-[6px] leading-[13px] text-[#7a7a7a]">
                                    {SCAN_NAMES.map((name) => (
                                        <p key={name}>{name}</p>
                                    ))}
                                </div>
                            </div>
                            <Axis offset={636}>
                                {Array.from({ length: 9 }, (_, i) => (
                                    <Tick key={i} y={661 + Math.round(i * 10.3)} label={`-0.${i + 1}`} />
                                ))}
                                <PriceTag y={650} label="0.00" bg="#fafa04" fg="#5c5c04" />
                                <rect x="20" y="638" width="8" height="10" fill="#3a3a3e" />
                                <text x="22" y="646" fill="#ccc" className="text-[8px]">F</text>
                            </Axis>
                        </div>
                        <div className="pr-[29px]">
                            <TimeAxis />
                        </div>
                        {/* crosshair */}
                        <div className="pointer-events-none absolute top-[499px] right-[29px] left-0 h-px bg-[#808080]" />
                        <div className="pointer-events-none absolute top-0 bottom-[17px] left-[1045px] w-px bg-[#808080]" />
                        <span className="absolute bottom-[1px] left-[1035px] h-[13px] w-[20px] border border-[#8a8a8a] bg-[#4a4a50] text-center text-[6px] leading-[11px] text-white">
                            11:06
                        </span>
                    </section>
                    <OrderPanel />
                </div>
                <div className="mr-[119px] ml-1 flex h-[9px] items-center justify-between bg-[#363638] text-[5px] leading-[7px] text-white">
                    <button aria-label="Scroll left" className="h-[7px] w-[5px] bg-black">◂</button>
                    <div className="flex">
                        <span className="h-[7px] w-[8px] bg-[#606064]" />
                        <button aria-label="Scroll right" className="h-[7px] w-[6px] bg-black">▸</button>
                    </div>
                </div>
                <div className="flex h-[17px] items-start pl-[14px]">
                    <button className="h-[14px] w-[43px] border border-t-0 border-[#0a6cb8] bg-[#1e1e1e] text-[7px] leading-[12px] font-bold text-[#0a8cfa]">
                        ES 03-26
                    </button>
                    <button aria-label="Add tab" className="flex h-[13px] w-[13px] items-center justify-center bg-[#3f3f46] text-gray-200">
                        <Plus size={8} />
                    </button>
                </div>
            </main>
            <Taskbar />
        </div>
    );
}
